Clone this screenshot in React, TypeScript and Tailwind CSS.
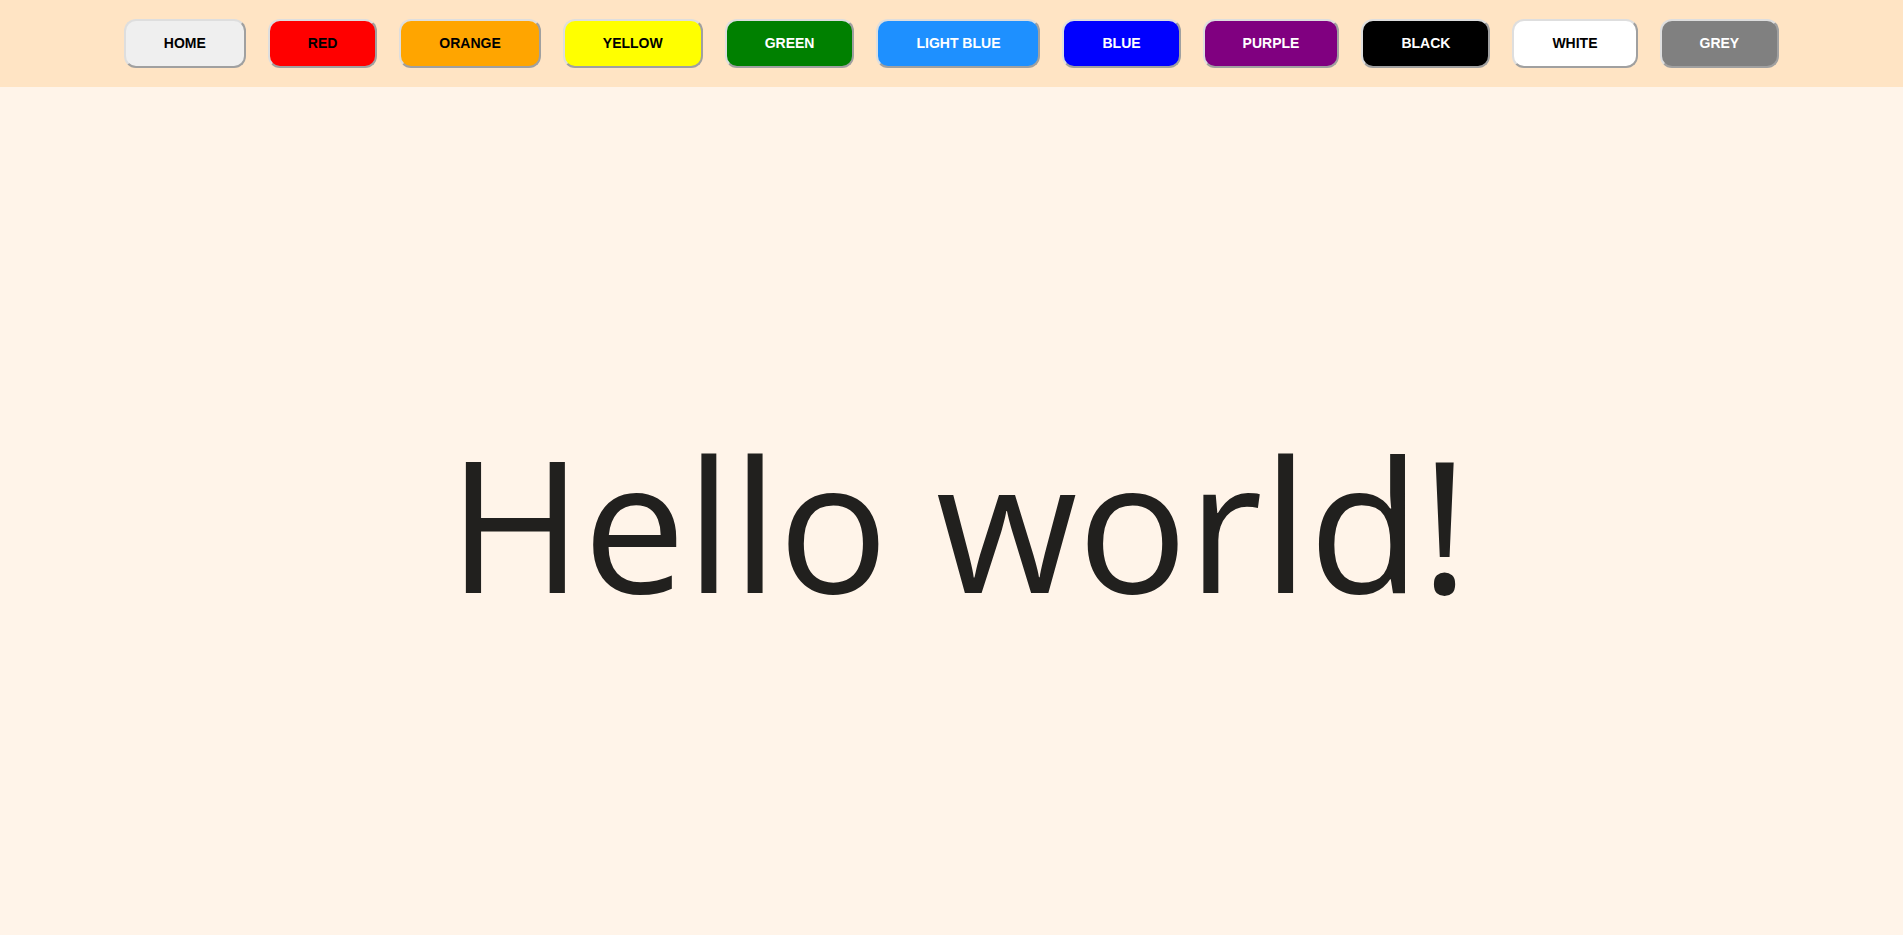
const buttons = [
  { label: "HOME", cls: "bg-[#efefef] text-black" },
  { label: "RED", cls: "bg-[#ff0000] text-black" },
  { label: "ORANGE", cls: "bg-[#ffa500] text-black" },
  { label: "YELLOW", cls: "bg-[#ffff00] text-black" },
  { label: "GREEN", cls: "bg-[#008000] text-white" },
  { label: "LIGHT BLUE", cls: "bg-[#1e90ff] text-white" },
  { label: "BLUE", cls: "bg-[#0000ff] text-white" },
  { label: "PURPLE", cls: "bg-[#800080] text-white" },
  { label: "BLACK", cls: "bg-[#000000] text-white" },
  { label: "WHITE", cls: "bg-[#ffffff] text-black" },
  { label: "GREY", cls: "bg-[#808080] text-white" },
];

export default function App() {
  return (
    <div className="min-h-screen bg-[#fff4e9] flex flex-col">
      <header className="h-[87px] bg-[#ffe4c4] flex items-center justify-center gap-[22px]">
        {buttons.map((b) => (
          <button
            key={b.label}
            type="button"
            className={
              "h-[49px] px-[38px] rounded-[12px] border-2 border-t-[#dedede] border-l-[#dedede] border-b-[#a0a0a0] border-r-[#a0a0a0] font-bold text-[14px] font-['Liberation_Sans',Arial,sans-serif] " +
              b.cls
            }
          >
            {b.label}
          </button>
        ))}
      </header>
      <main className="h-[848px] pt-[22px] pl-[14px] flex items-center justify-center">
        <h1 className="text-[183px] leading-normal text-[#21201e] font-['Open_Sans',sans-serif]">
          Hello world!
        </h1>
      </main>
    </div>
  );
}
